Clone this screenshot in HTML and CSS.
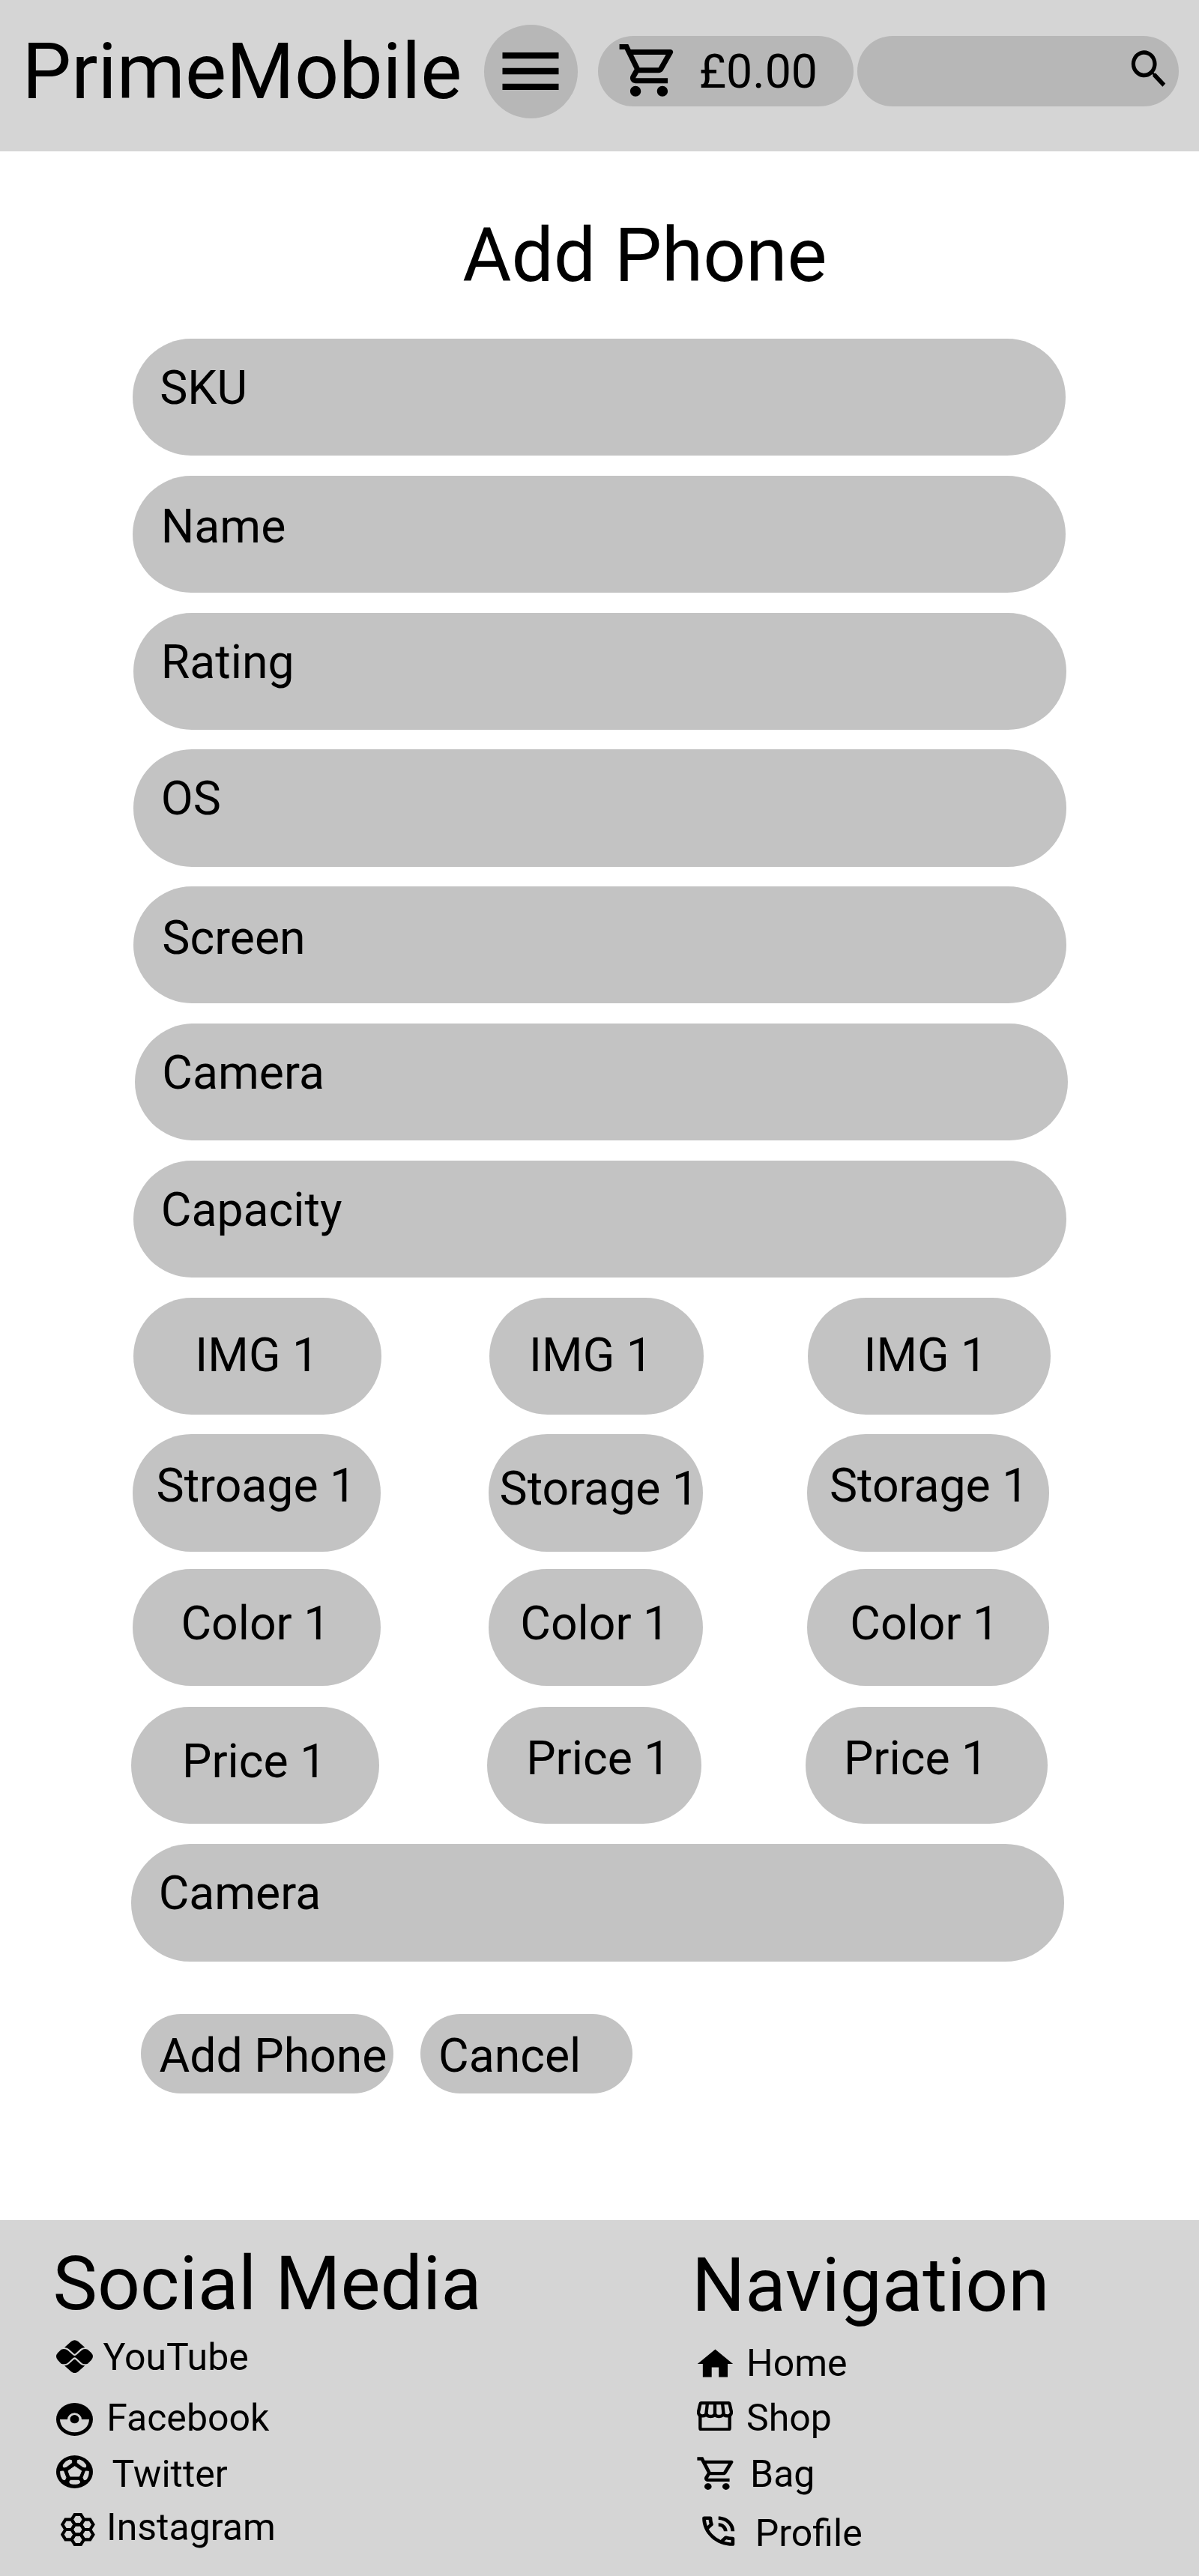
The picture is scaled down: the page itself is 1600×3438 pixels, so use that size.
FILE: index.html
```html
<!DOCTYPE html>
<html lang="en">
<head>
<meta charset="utf-8">
<title>PrimeMobile – Add Phone</title>
<link rel="stylesheet" href="styles.css">
</head>
<body>
<header class="header">
  <div class="brand">PrimeMobile</div>
  <button class="menu" aria-label="Menu">
    <svg class="menu-icon" viewBox="0 0 24 24"><path d="M3 18h18v-2H3v2zm0-5h18v-2H3v2zm0-7v2h18V6H3z"/></svg>
  </button>
  <div class="basket">
    <svg class="basket-icon" viewBox="0 0 24 24" preserveAspectRatio="none"><path d="M15.55 13c.75 0 1.41-.41 1.75-1.03l3.58-6.49A.996.996 0 0020.01 4H5.21l-.94-2H1v2h2l3.6 7.59-1.35 2.44C4.52 15.37 5.48 17 7 17h12v-2H7l1.1-2h7.45zM6.16 6h12.15l-2.76 5H8.53L6.16 6zM7 18c-1.1 0-1.99.9-1.99 2S5.9 22 7 22s2-.9 2-2-.9-2-2-2zm10 0c-1.1 0-1.99.9-1.99 2s.89 2 1.99 2 2-.9 2-2-.9-2-2-2z"/></svg>
    <span class="basket-total">£0.00</span>
  </div>
  <div class="search">
    <svg class="search-icon" viewBox="0 0 24 24" preserveAspectRatio="none"><path d="M15.5 14h-.79l-.28-.27A6.471 6.471 0 0016 9.5 6.5 6.5 0 109.5 16c1.61 0 3.09-.59 4.23-1.57l.27.28v.79l5 4.99L20.49 19l-4.99-5zm-6 0C7.01 14 5 11.99 5 9.5S7.01 5 9.5 5 14 7.01 14 9.5 11.99 14 9.5 14z"/></svg>
  </div>
</header>

<main class="main">
  <h1 class="title">Add Phone</h1>
  <div class="form">
    <div class="field field-sku">SKU</div>
    <div class="field field-name">Name</div>
    <div class="field field-rating">Rating</div>
    <div class="field field-os">OS</div>
    <div class="field field-screen">Screen</div>
    <div class="field field-camera">Camera</div>
    <div class="field field-capacity">Capacity</div>
    <div class="row row-img">
      <div class="cell">IMG 1</div>
      <div class="cell">IMG 1</div>
      <div class="cell">IMG 1</div>
    </div>
    <div class="row row-storage">
      <div class="cell">Stroage 1</div>
      <div class="cell">Storage 1</div>
      <div class="cell">Storage 1</div>
    </div>
    <div class="row row-color">
      <div class="cell">Color 1</div>
      <div class="cell">Color 1</div>
      <div class="cell">Color 1</div>
    </div>
    <div class="row row-price">
      <div class="cell">Price 1</div>
      <div class="cell">Price 1</div>
      <div class="cell">Price 1</div>
    </div>
    <div class="field field-last">Camera</div>
  </div>
  <div class="actions">
    <button class="button button-add">Add Phone</button>
    <button class="button button-cancel">Cancel</button>
  </div>
</main>

<footer class="footer">
  <section class="social">
    <h2 class="footer-title">Social Media</h2>
    <ul class="links">
      <li class="link youtube">
        <svg class="icon" viewBox="0 0 148 134"><path d="M33 30L60 6Q74-5 88 6L115 30Q102 31 97 36L78 54Q74 58 70 54L50 36Q45 31 33 30ZM33 103L60 127Q74 138 88 127L115 103Q102 102 97 97L78 79Q74 75 70 79L50 97Q45 102 33 103ZM20 38Q36 33 46 41L68 61Q74 65 80 61L102 41Q110 33 126 38L141 52Q153 66 141 80L126 95Q110 100 102 92L80 72Q74 68 68 72L46 92Q36 100 20 95L6 80Q-6 66 6 52Z"/></svg>
        <span>YouTube</span>
      </li>
      <li class="link facebook">
        <svg class="icon" viewBox="0 0 148 134"><path fill-rule="evenodd" d="M0 66A73.5 66 0 0 1 147 66A73.5 66 0 0 1 0 66ZM15 66H45A28.5 26 0 0 1 102 66H132A58.5 52 0 0 1 15 66Z"/><ellipse cx="73.5" cy="65" rx="18" ry="17"/></svg>
        <span>Facebook</span>
      </li>
      <li class="link twitter">
        <svg class="icon" viewBox="0 0 148 134"><ellipse cx="73.5" cy="66" rx="73.5" ry="66"/><g class="cut"><path d="M74 44L101 62L92 84H56L48 62Z"/><path d="M28 45V38Q38 22 53 18L62 20V30L40 46L30 48Z"/><path d="M119 45V38Q109 22 94 18L85 20V30L107 46L117 48Z"/><path d="M17 64L29 63L39 89L35 98L26 96Q16 82 17 64Z"/><path d="M130 64L118 63L108 89L112 98L121 96Q131 82 130 64Z"/><path d="M54 103L58 100H90L94 103V110Q90 115 74 115Q58 115 54 110Z"/></g></svg>
        <span>Twitter</span>
      </li>
      <li class="link instagram">
        <svg class="icon" viewBox="0 0 138 133">
          <defs><path id="hex" d="M-24.7 0L-12.3-20H12.3L24.7 0L12.3 20H-12.3Z"/></defs>
          <g fill="none" stroke="#000" stroke-width="12.5">
            <use href="#hex" x="68.5" y="26"/><use href="#hex" x="31.5" y="46"/><use href="#hex" x="105.5" y="46"/><use href="#hex" x="68.5" y="66"/><use href="#hex" x="31.5" y="86"/><use href="#hex" x="105.5" y="86"/><use href="#hex" x="68.5" y="106"/>
          </g>
        </svg>
        <span>Instagram</span>
      </li>
    </ul>
  </section>
  <nav class="navigation">
    <h2 class="footer-title">Navigation</h2>
    <ul class="links">
      <li class="link home">
        <svg class="icon" viewBox="0 0 24 24" preserveAspectRatio="none"><path d="M10 20v-6h4v6h5v-8h3L12 3 2 12h3v8z"/></svg>
        <span>Home</span>
      </li>
      <li class="link shop">
        <svg class="icon" viewBox="0 0 144 118"><g fill="none" stroke="#000" stroke-width="13"><path d="M20 6H124Q130 6 131 11L138 42Q138 58 122 58Q106 58 106 48Q104 60 88 60Q73 60 72 48Q71 60 55 60Q39 60 38 48Q36 58 22 58Q6 58 6 42L13 11Q14 6 20 6Z"/><path d="M42 6L37 50M72 6V50M102 6L107 50M13 56V107Q13 112 18 112H126Q131 112 131 107V56"/></g></svg>
        <span>Shop</span>
      </li>
      <li class="link bag">
        <svg class="icon" viewBox="0 0 24 24" preserveAspectRatio="none"><path d="M15.55 13c.75 0 1.41-.41 1.75-1.03l3.58-6.49A.996.996 0 0020.01 4H5.21l-.94-2H1v2h2l3.6 7.59-1.35 2.44C4.52 15.37 5.48 17 7 17h12v-2H7l1.1-2h7.45zM6.16 6h12.15l-2.76 5H8.53L6.16 6zM7 18c-1.1 0-1.99.9-1.99 2S5.9 22 7 22s2-.9 2-2-.9-2-2-2zm10 0c-1.1 0-1.99.9-1.99 2s.89 2 1.99 2 2-.9 2-2-.9-2-2-2z"/></svg>
        <span>Bag</span>
      </li>
      <li class="link profile">
        <svg class="icon" viewBox="0 0 24 24" preserveAspectRatio="none"><path d="M19 12h2c0-4.97-4.03-9-9-9v2c3.87 0 7 3.13 7 7zm-4 0h2c0-2.76-2.24-5-5-5v2c1.66 0 3 1.34 3 3zm5 3.5c-1.25 0-2.45-.2-3.57-.57-.1-.03-.21-.05-.31-.05-.26 0-.51.1-.71.29l-2.2 2.2c-2.83-1.44-5.15-3.75-6.59-6.59l2.2-2.21c.28-.26.36-.65.25-1C8.7 6.45 8.5 5.25 8.5 4c0-.55-.45-1-1-1H4c-.55 0-1 .45-1 1 0 9.39 7.61 17 17 17 .55 0 1-.45 1-1v-3.5c0-.55-.45-1-1-1zM5.03 5h1.5c.07.88.22 1.75.46 2.59L5.79 8.8c-.41-1.21-.67-2.48-.76-3.8zM19 18.97c-1.32-.09-2.6-.35-3.8-.76l1.2-1.2c.85.24 1.71.39 2.59.45v1.51z"/></svg>
        <span>Profile</span>
      </li>
    </ul>
  </nav>
</footer>
</body>
</html>
```
FILE: styles.css
```css
/* Layout unit: the page is designed on a 1024-unit-wide grid. */
:root {
  --u: 1.5625px;
  --bar: #d5d5d5;
  --pill: #b7b7b7;
  --field: #c3c3c3;
}

* { box-sizing: border-box; }

body {
  margin: 0;
  width: 1600px;
  height: 3438px;
  display: flex;
  flex-direction: column;
  background: #fff;
  color: #000;
  font-family: Roboto, sans-serif;
  font-weight: 400;
  overflow-x: hidden;
}

button {
  border: 0;
  padding: 0;
  margin: 0;
  color: inherit;
  font: inherit;
  text-align: left;
}

svg { display: block; flex: none; }

/* Header */
.header {
  display: flex;
  align-items: flex-start;
  height: calc(129 * var(--u));
  background: var(--bar);
}

.brand {
  width: 616.4px;
  margin-left: 29.6px;
  padding-top: 34.5px;
  font-size: 104px;
  line-height: 122px;
  white-space: nowrap;
}

.menu {
  display: flex;
  align-items: flex-start;
  width: 125px;
  height: 125px;
  margin-top: 33px;
  padding: 12px 0 0 11.8px;
  border-radius: 50%;
  background: var(--pill);
}

.menu-icon { width: 100px; height: 100px; }

.basket,
.search {
  display: flex;
  align-items: flex-start;
  height: 94px;
  margin-top: 47.8px;
  border-radius: 47px;
  background: var(--pill);
}

.basket { width: 341.7px; margin-left: 26.8px; }

.basket-icon {
  width: 86px;
  height: 83.6px;
  margin: 4.2px 0 0 25.1px;
}

.basket-total {
  margin: 10.9px 0 0 23.9px;
  font-size: 62.5px;
  line-height: 73px;
}

.search {
  width: 429.7px;
  margin-left: 4.2px;
  justify-content: flex-end;
}

.search-icon {
  width: 62.4px;
  height: 66.4px;
  margin: 11.2px 9.4px 0 0;
}

/* Form */
.title {
  margin: 80.4px 0 53px calc(395 * var(--u));
  font-size: 100px;
  font-weight: 400;
  line-height: 117px;
}

.form {
  display: flex;
  flex-direction: column;
  gap: calc(17 * var(--u));
}

.field,
.cell {
  height: calc(100 * var(--u));
  border-radius: calc(50 * var(--u));
  background: var(--field);
  font-size: 62.5px;
  line-height: 73px;
  white-space: nowrap;
  text-indent: .7px;
}

.field {
  width: calc(797 * var(--u));
  margin-left: calc(114 * var(--u));
  padding: 29px 0 0 calc(23 * var(--u));
}

.field-sku { margin-left: calc(113 * var(--u)); }
.field-name { margin-left: calc(113 * var(--u)); padding: 31.5px 0 0 calc(24 * var(--u)); }
.field-screen { padding: 31.5px 0 0 calc(24 * var(--u)); }
.field-camera { margin-left: calc(115 * var(--u)); }
.field-last { margin-left: calc(112 * var(--u)); }

.row { display: flex; margin-left: calc(113 * var(--u)); }
.row-img { margin-left: calc(114 * var(--u)); }
.row-color { margin-top: calc(-2 * var(--u)); }
.row-price {
  margin: calc(.5 * var(--u)) 0 calc(.5 * var(--u)) calc(112 * var(--u));
}

.cell { padding-top: 32px; }
.cell:nth-child(1) { width: calc(212 * var(--u)); margin-right: calc(92 * var(--u)); }
.cell:nth-child(2) { width: calc(183 * var(--u)); margin-right: calc(89 * var(--u)); }
.cell:nth-child(3) { width: calc(207 * var(--u)); }

.row-img .cell { padding-top: 40px; }
.row-img .cell:nth-child(1) { padding-left: 81.5px; }
.row-img .cell:nth-child(2) { padding-left: 52.3px; }
.row-img .cell:nth-child(3) { padding-left: 73.6px; }

.row-storage .cell:nth-child(1) { padding-left: 31.3px; }
.row-storage .cell:nth-child(2) { padding: 36px 0 0 14.3px; }
.row-storage .cell:nth-child(3) { padding-left: 29.7px; }

.row-color .cell { padding-top: 36px; }
.row-color .cell:nth-child(1) { padding-left: 64.2px; }
.row-color .cell:nth-child(2) { padding-left: 42px; }
.row-color .cell:nth-child(3) { padding-left: 57px; }

.row-price .cell:nth-child(1) { padding: 36px 0 0 67.3px; }
.row-price .cell:nth-child(2) { padding-left: 51.5px; }
.row-price .cell:nth-child(3) { padding-left: 50.2px; }

.actions {
  display: flex;
  gap: calc(23 * var(--u));
  margin: calc(45 * var(--u)) 0 0 calc(120 * var(--u));
}

.button {
  display: flex;
  align-items: flex-start;
  height: calc(68 * var(--u));
  padding: 19.2px 0 0 calc(16 * var(--u));
  border-radius: calc(34 * var(--u));
  background: var(--field);
  font-size: 62.5px;
  line-height: 73px;
  white-space: nowrap;
}

.button-add { width: calc(216 * var(--u)); }
.button-cancel { width: calc(181 * var(--u)); padding-left: 24.1px; }

/* Footer */
.footer {
  display: flex;
  align-items: flex-start;
  height: 475.5px;
  margin-top: auto;
  background: var(--bar);
}

.social { width: 923px; padding-top: 26.2px; }
.navigation { padding-top: 28.5px; }

.footer-title {
  margin: 0;
  font-size: 100px;
  font-weight: 400;
  line-height: 117px;
}

.social .footer-title { margin: 0 0 11px 70.6px; }
.navigation .footer-title { margin-bottom: 17px; }

.links { margin: 0; padding: 0; list-style: none; }

.link {
  display: flex;
  align-items: flex-start;
  font-size: 50px;
  line-height: 58px;
}

.social .link { padding-left: 75.4px; }
.social .icon { width: 49.3px; height: 44.7px; }

.youtube { height: 81.3px; }
.youtube .icon { margin: 6px 12.9px 0 0; }
.facebook { height: 75px; }
.facebook .icon { margin: 8.7px 17.5px 0 0; }
.twitter { height: 71px; }
.twitter .icon { margin: 4.3px 24.7px 0 0; }
.instagram { height: 58px; }
.instagram .icon { width: 46px; height: 44.3px; margin: 9.7px 14.6px 0 6.1px; }

.home { height: 73px; }
.home .icon { width: 56.9px; height: 52.2px; margin: 3.5px 13.6px 0 2.6px; }
.shop { height: 75px; }
.shop .icon { width: 48px; height: 39.3px; margin: 6.7px 18.1px 0 7px; }
.bag { height: 79.3px; }
.bag .icon { width: 57.6px; height: 52.3px; margin: 2.3px 15.8px 0 4.6px; }
.profile { height: 58px; }
.profile .icon { width: 57.4px; height: 52.4px; margin: 0 20.6px 0 6.8px; }

.cut { fill: var(--bar); stroke: var(--bar); stroke-width: 3; stroke-linejoin: round; }
```
